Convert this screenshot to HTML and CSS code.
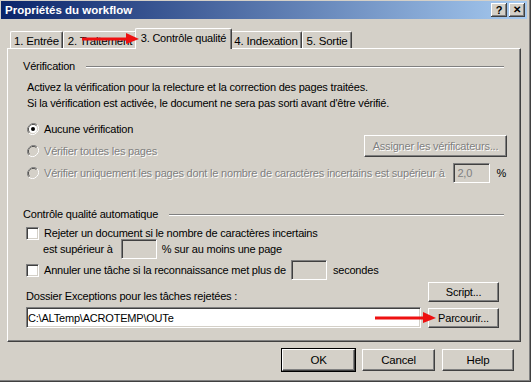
FILE: index.html
```html
<!DOCTYPE html>
<html lang="fr">
<head>
<meta charset="utf-8">
<title>Propriétés du workflow</title>
<link rel="stylesheet" href="styles.css">
</head>
<body>
<div class="window">
  <div class="titlebar">
    <span class="title">Propriétés du workflow</span>
    <span class="tbtn">?</span>
    <span class="tbtn close">✕</span>
  </div>

  <div class="tabs">
    <div class="tab t1">1. Entrée</div>
    <div class="tab t2">2. Traitement</div>
    <div class="tab t3 active">3. Contrôle qualité</div>
    <div class="tab t4">4. Indexation</div>
    <div class="tab t5">5. Sortie</div>
  </div>

  <div class="panel">
    <div class="legend"><span>Vérification</span><span class="etch"></span></div>
    <p class="para">Activez la vérification pour la relecture et la correction des pages traitées.</p>
    <p class="para">Si la vérification est activée, le document ne sera pas sorti avant d'être vérifié.</p>

    <div class="row radio-row r1">
      <svg class="radio" width="12" height="12" viewBox="0 0 12 12"><path d="M10.2 1.8A6 6 0 0 0 1.8 10.2" fill="none" stroke="#808080"/><path d="M9.5 2.5A5 5 0 0 0 2.5 9.5" fill="none" stroke="#404040"/><path d="M1.8 10.2A6 6 0 0 0 10.2 1.8" fill="none" stroke="#fff"/><path d="M2.5 9.5A5 5 0 0 0 9.5 2.5" fill="none" stroke="#d4d0c8"/><circle cx="6" cy="6" r="4" fill="#fff"/><circle cx="6" cy="6" r="2" fill="#000"/></svg>
      <span class="lbl">Aucune vérification</span>
    </div>
    <div class="row radio-row r2">
      <svg class="radio" width="12" height="12" viewBox="0 0 12 12"><path d="M10.2 1.8A6 6 0 0 0 1.8 10.2" fill="none" stroke="#808080"/><path d="M9.5 2.5A5 5 0 0 0 2.5 9.5" fill="none" stroke="#404040"/><path d="M1.8 10.2A6 6 0 0 0 10.2 1.8" fill="none" stroke="#fff"/><path d="M2.5 9.5A5 5 0 0 0 9.5 2.5" fill="none" stroke="#d4d0c8"/><circle cx="6" cy="6" r="4" fill="#d4d0c8"/></svg>
      <span class="lbl disabled">Vérifier toutes les pages</span>
      <span class="btn assign disabled">Assigner les vérificateurs...</span>
    </div>
    <div class="row radio-row r3">
      <svg class="radio" width="12" height="12" viewBox="0 0 12 12"><path d="M10.2 1.8A6 6 0 0 0 1.8 10.2" fill="none" stroke="#808080"/><path d="M9.5 2.5A5 5 0 0 0 2.5 9.5" fill="none" stroke="#404040"/><path d="M1.8 10.2A6 6 0 0 0 10.2 1.8" fill="none" stroke="#fff"/><path d="M2.5 9.5A5 5 0 0 0 9.5 2.5" fill="none" stroke="#d4d0c8"/><circle cx="6" cy="6" r="4" fill="#d4d0c8"/></svg>
      <span class="lbl disabled">Vérifier uniquement les pages dont le nombre de caractères incertains est supérieur à</span>
      <span class="field pct">2,0</span>
      <span class="pctsign">%</span>
    </div>

    <div class="legend l2"><span>Contrôle qualité automatique</span><span class="etch"></span></div>

    <div class="row cb-row c1">
      <span class="checkbox"></span>
      <span class="lbl">Rejeter un document si le nombre de caractères incertains</span>
    </div>
    <div class="row cb-sub">
      <span class="lbl">est supérieur à</span>
      <span class="field small f1"></span>
      <span class="lbl after1">% sur au moins une page</span>
    </div>
    <div class="row cb-row c2">
      <span class="checkbox"></span>
      <span class="lbl">Annuler une tâche si la reconnaissance met plus de</span>
      <span class="field small f2"></span>
      <span class="lbl after2">secondes</span>
    </div>

    <div class="row folder-row">
      <span class="lbl">Dossier Exceptions pour les tâches rejetées :</span>
      <span class="btn side">Script...</span>
    </div>
    <div class="row path-row">
      <span class="field path">C:\ALTemp\ACROTEMP\OUTe</span>
      <span class="btn side">Parcourir...</span>
    </div>
  </div>

  <div class="footer">
    <span class="btn foot default">OK</span>
    <span class="btn foot">Cancel</span>
    <span class="btn foot">Help</span>
  </div>

  <svg class="arrow a1" width="58" height="14" viewBox="0 0 58 14"><rect x="0" y="5.5" width="46" height="3" fill="#ee1111"/><polygon points="44,1 57,7 44,12" fill="#ee1111"/></svg>
  <svg class="arrow a2" width="62" height="14" viewBox="0 0 62 14"><rect x="0" y="5.5" width="50" height="3" fill="#ee1111"/><polygon points="48,1 61,7 48,12" fill="#ee1111"/></svg>
</div>
</body>
</html>
```

FILE: styles.css
```css
* { box-sizing: border-box; }
html, body { margin: 0; padding: 0; background: #d4d0c8; }
body { font-family: Tahoma, "Liberation Sans", Arial, sans-serif; font-size: 11px; letter-spacing: -0.2px; color: #000; }

.window {
  position: relative;
  width: 531px;
  height: 382px;
  background: #d4d0c8;
  border-right: 1px solid #404040;
  border-bottom: 1px solid #404040;
  box-shadow: inset -1px -1px 0 #808080;
  overflow: hidden;
}

.titlebar {
  display: flex;
  align-items: center;
  height: 18px;
  margin: 1px 3px 0 1px;
  padding: 0 2px 0 4px;
  background: linear-gradient(to right, #0a246a, #a6caf0);
}
.title { flex: 1; color: #fff; font-weight: bold; font-size: 11.5px; letter-spacing: 0; }
.tbtn {
  width: 16px; height: 14px;
  display: flex; align-items: center; justify-content: center;
  background: #d4d0c8;
  box-shadow: inset -1px -1px #404040, inset 1px 1px #fff, inset -2px -2px #808080;
  font-weight: bold; font-size: 11px; line-height: 1; letter-spacing: 0;
}
.tbtn.close { margin-left: 2px; font-size: 10px; }

.tabs {
  display: flex;
  align-items: flex-end;
  height: 20px;
  margin-top: 9px;
  padding-left: 10px;
  position: relative;
  z-index: 2;
}
.tab {
  height: 17px;
  display: flex; align-items: center; justify-content: center;
  padding-top: 1px;
  background: #d4d0c8;
  border-top: 1px solid #fff;
  border-left: 1px solid #fff;
  border-right: 1px solid #404040;
  box-shadow: inset -1px 0 #808080;
  border-radius: 2px 2px 0 0;
  white-space: nowrap;
  font-size: 11.5px;
}
.t1 { width: 53px; }
.t2 { width: 74px; }
.t3 { width: 97px; font-size: 11px; }
.t4 { width: 72px; }
.t5 { width: 50px; }
.tab.active {
  height: 21px;
  margin: 0 -2px -1px -2px;
  padding-top: 0;
  padding-bottom: 3px;
  position: relative;
  z-index: 3;
}

.panel {
  position: relative;
  z-index: 1;
  margin-left: 7px;
  width: 514px;
  height: 294px;
  border-top: 1px solid #fff;
  border-left: 1px solid #fff;
  border-right: 1px solid #404040;
  border-bottom: 1px solid #404040;
  box-shadow: inset -1px -1px #808080;
  padding: 10px 13px 0 15px;
}

.legend { display: flex; align-items: center; height: 14px; }
.etch {
  flex: 1;
  height: 2px;
  margin: 1px 3px 0 11px;
  border-top: 1px solid #808080;
  border-bottom: 1px solid #fff;
}
.legend.l2 { margin-top: 24px; }

.para { margin: 0; padding-left: 4px; line-height: 16px; height: 16px; }
.legend + .para { margin-top: 6px; }

.row { display: flex; align-items: center; }
.lbl { line-height: 16px; white-space: nowrap; }
.disabled { color: #808080; text-shadow: 1px 1px 0 #fff; }

.radio { flex: none; margin: 0 5px 0 4px; }
.radio-row.r1 { margin-top: 10px; height: 16px; }
.radio-row.r2 { margin-top: -2px; height: 24px; align-items: flex-start; }
.radio-row.r2 .radio { margin-top: 10px; }
.radio-row.r2 .lbl { margin-top: 8px; }
.radio-row.r3 { margin-top: 4px; height: 20px; }

.btn {
  display: flex; align-items: center; justify-content: center;
  background: #d4d0c8;
  border-top: 1px solid #fff;
  border-left: 1px solid #fff;
  border-right: 1px solid #404040;
  border-bottom: 1px solid #404040;
  box-shadow: inset -1px -1px #808080;
  white-space: nowrap;
}
.btn.assign { margin-left: auto; width: 143px; height: 22px; }

.field {
  display: flex; align-items: center;
  height: 20px;
  border-top: 1px solid #808080;
  border-left: 1px solid #808080;
  border-right: 1px solid #fff;
  border-bottom: 1px solid #fff;
  box-shadow: inset 1px 1px #404040, inset -1px -1px #d4d0c8;
  background: #d4d0c8;
  padding-left: 3px;
}
.field.pct { width: 37px; margin-left: auto; color: #808080; margin-right: 6px; }
.pctsign { margin-right: 1px; }

.cb-row.c1 { margin-top: 4px; height: 16px; }
.checkbox {
  flex: none;
  width: 13px; height: 13px;
  margin: 0 5px 0 3px;
  background: #fff;
  border-top: 1px solid #808080;
  border-left: 1px solid #808080;
  border-right: 1px solid #fff;
  border-bottom: 1px solid #fff;
  box-shadow: inset 1px 1px #404040, inset -1px -1px #d4d0c8;
}
.cb-sub { margin-top: -2px; height: 20px; padding-left: 20px; }
.field.small { width: 36px; }
.f1 { margin-left: 8px; }
.after1 { margin-left: 5px; }
.cb-row.c2 { margin-top: 1px; height: 20px; }
.f2 { margin-left: 5px; }
.after2 { margin-left: 6px; }

.folder-row { margin-top: 2px; height: 20px; align-items: flex-end; padding-left: 3px; }
.folder-row .lbl { margin-bottom: -2px; }
.btn.side { width: 71px; height: 20px; margin-left: auto; margin-right: 8px; }
.path-row { margin-top: 5px; height: 21px; padding-left: 3px; }
.field.path { width: 395px; height: 21px; background: #fff; padding-left: 1px; }

.footer {
  display: flex;
  justify-content: flex-end;
  gap: 7px;
  margin-top: 7px;
  padding-right: 16px;
}
.btn.foot { width: 73px; height: 22px; font-size: 11.5px; }
.btn.foot.default { outline: 1px solid #000; }
.btn.foot:last-child { width: 72px; }

.arrow { position: absolute; z-index: 5; }
.a1 { left: 82px; top: 32px; }
.a2 { left: 375px; top: 311px; }
```
